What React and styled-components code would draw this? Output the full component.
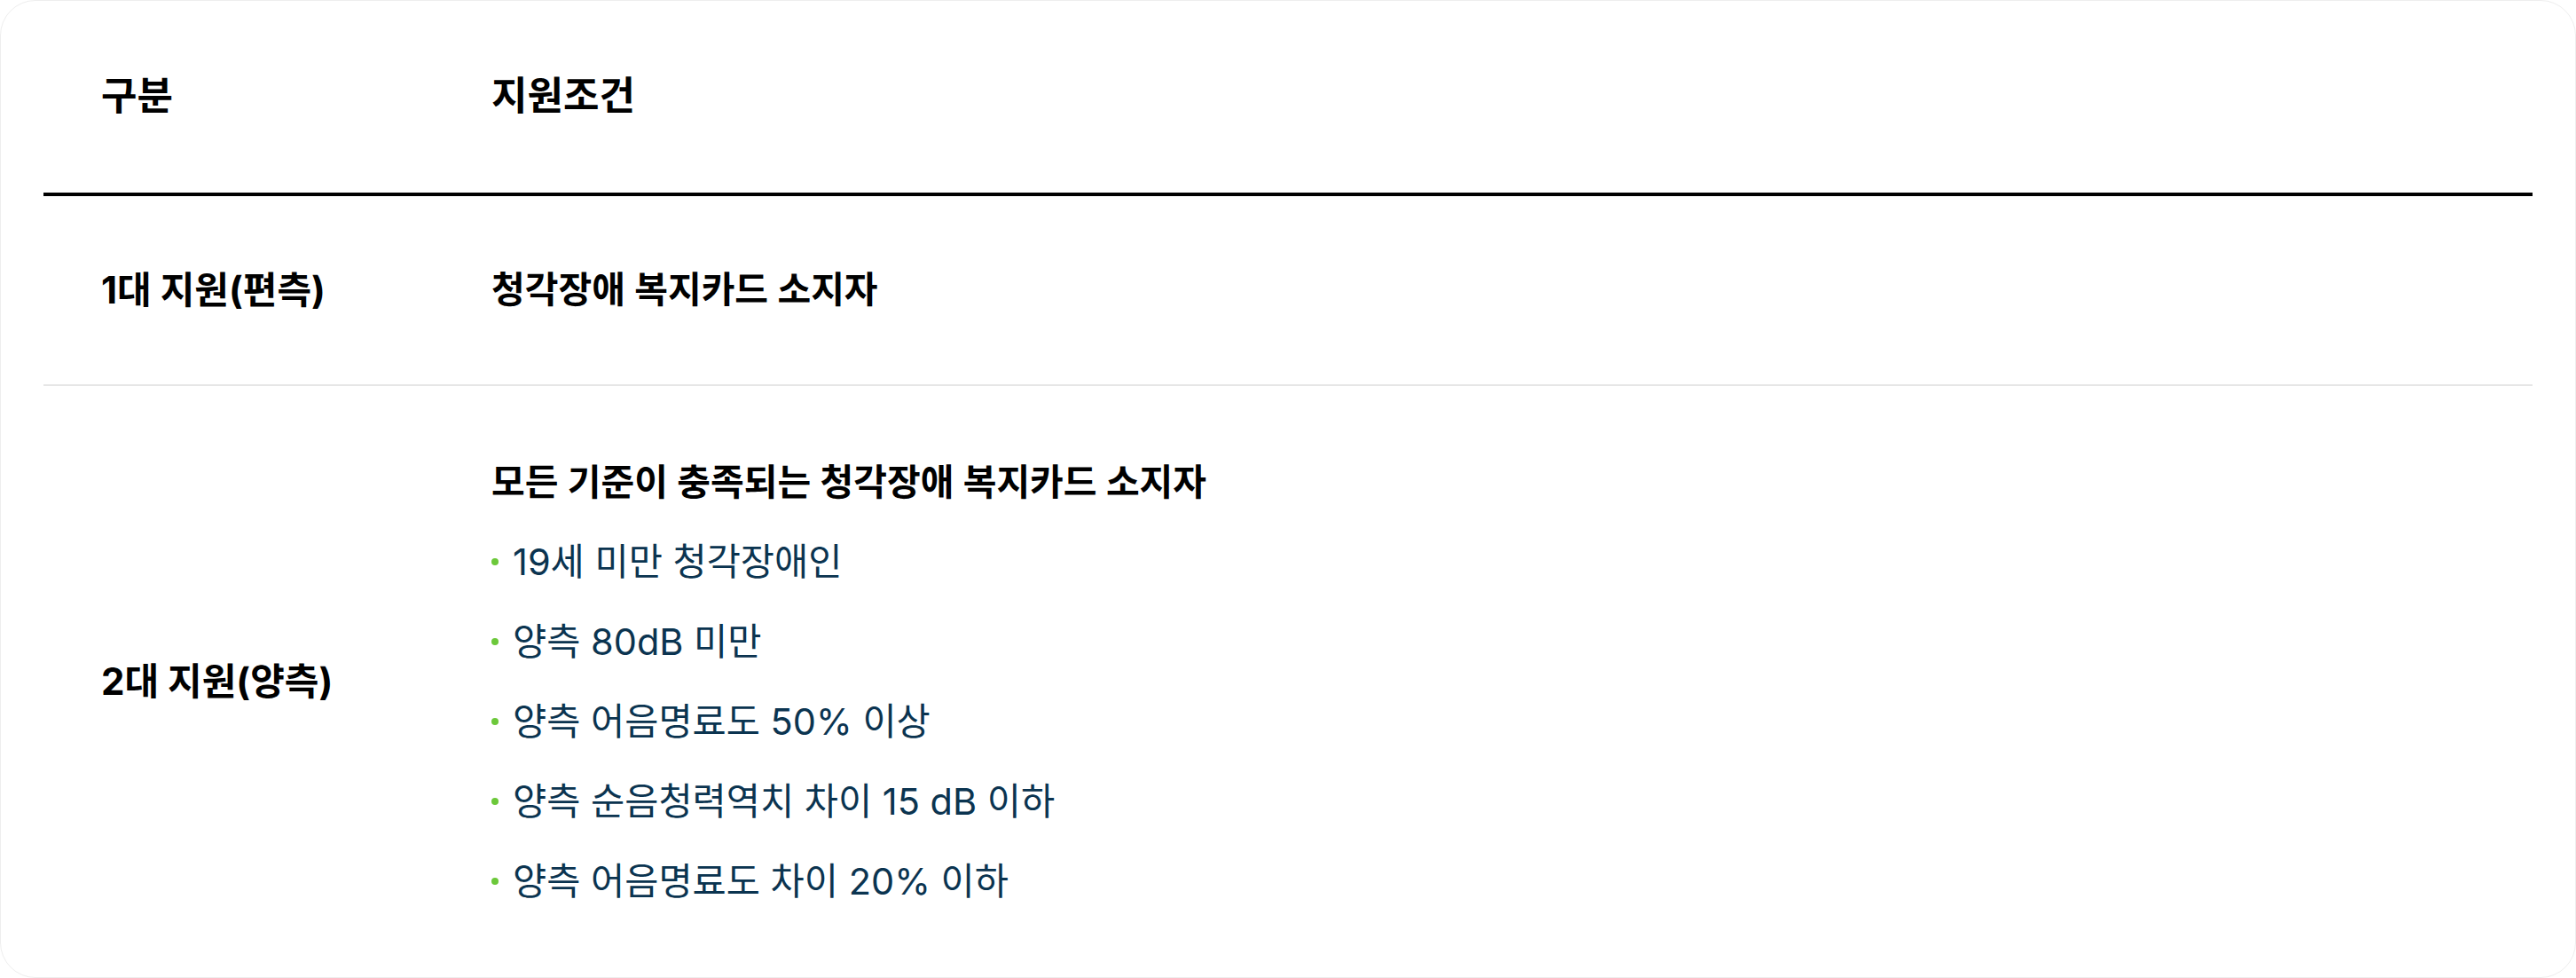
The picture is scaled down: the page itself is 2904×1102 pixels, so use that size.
import styled, { createGlobalStyle } from "styled-components";

const GlobalStyle = createGlobalStyle`
  html, body {
    margin: 0;
    padding: 0;
    background: #fff;
  }
  body {
    font-family: "Inter", "Noto Sans CJK KR", sans-serif;
    color: #000;
  }
  * { box-sizing: border-box; }
`;

const Card = styled.div`
  height: 100vh;
  padding: 0 48px;
  border: 1px solid #eeeeee;
  border-radius: 40px;
  background: #fff;
  display: flex;
  flex-direction: column;
`;

const Row = styled.div`
  display: grid;
  grid-template-columns: 440px 1fr;
  align-items: center;
  height: ${props => props.height ? `${props.height}px` : "auto"};
  flex: ${props => props.grow ? 1 : "none"};
  border-bottom: ${props => props.line};
`;

const Cell = styled.div`
  padding-left: 65px;
  font-size: ${props => props.size || 42}px;
  font-weight: ${props => props.weight || 700};
  line-height: 1.4;
  color: #000;
`;

const Conditions = styled.div`
  padding-left: 65px;
  display: flex;
  flex-direction: column;
  gap: 36px;
`;

const Lead = styled.div`
  font-size: 41px;
  font-weight: 600;
  line-height: 54px;
  color: #000;
`;

const Item = styled.div`
  display: flex;
  align-items: center;
  gap: 16px;
  font-size: 41.5px;
  font-weight: 400;
  line-height: 54px;
  color: #0b3450;
`;

const Dot = styled.span`
  width: 8px;
  height: 8px;
  border-radius: 50%;
  background: #6cc83a;
  flex: none;
`;

const items = [
  "19세 미만 청각장애인",
  "양측 80dB 미만",
  "양측 어음명료도 50% 이상",
  "양측 순음청력역치 차이 15 dB 이하",
  "양측 어음명료도 차이 20% 이하",
];

export default function App() {
  return (
    <>
      <GlobalStyle />
      <Card>
        <Row height={220} line="4px solid #000">
          <Cell size={44}>구분</Cell>
          <Cell size={44}>지원조건</Cell>
        </Row>
        <Row height={214} line="2px solid #e6e6e6">
          <Cell>1대 지원(편측)</Cell>
          <Cell size={41} weight={600}>청각장애 복지카드 소지자</Cell>
        </Row>
        <Row grow>
          <Cell>2대 지원(양측)</Cell>
          <Conditions>
            <Lead>모든 기준이 충족되는 청각장애 복지카드 소지자</Lead>
            {items.map(text => (
              <Item key={text}>
                <Dot />
                {text}
              </Item>
            ))}
          </Conditions>
        </Row>
      </Card>
    </>
  );
}
